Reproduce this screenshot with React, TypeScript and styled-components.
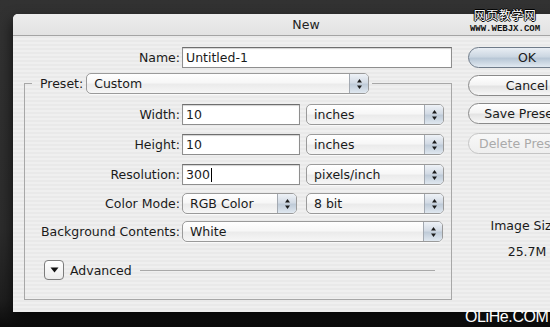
import React from 'react'
import styled, { createGlobalStyle } from 'styled-components'

const Global = createGlobalStyle`
  html, body {
    margin: 0;
    padding: 0;
    background: #2b2b2b;
    overflow: hidden;
  }
  body {
    font-family: "DejaVu Sans", "Liberation Sans", sans-serif;
  }
`

const Page = styled.div`
  position: relative;
  width: 550px;
  height: 327px;
  overflow: hidden;
  box-sizing: border-box;
  padding: 14px 0 0 13px;
  background: linear-gradient(#323232 0, #2c2c2c 70%, #1e1e1e 92%, #0c0c0c 100%);
`

const Dialog = styled.div`
  width: 586px;
  height: 298px;
  border-radius: 5px 5px 0 0;
  overflow: hidden;
  background: repeating-linear-gradient(#efefef 0 2px, #e9e9e9 2px 4px);
  box-shadow: 0 6px 14px rgba(0, 0, 0, 0.7);
  font-size: 12.5px;
  color: #1a1a1a;
`

const TitleBar = styled.div`
  height: 21px;
  border-bottom: 1px solid #a4a4a4;
  background: linear-gradient(#ededed, #e2e2e2);
  display: flex;
  align-items: center;
  justify-content: center;
  font-size: 12.5px;
  color: #222;
`

const Body = styled.div`
  display: flex;
  gap: 16px;
  padding: 11px 0 0 11px;
`

const LeftCol = styled.div`
  width: 428px;
  display: flex;
  flex-direction: column;
`

const FormRow = styled.div<{ $mt?: number }>`
  display: grid;
  grid-template-columns: 155px auto;
  column-gap: 2px;
  align-items: center;
  margin-top: ${p => p.$mt ?? 0}px;
`

const NameRow = styled(FormRow)`
  grid-template-columns: 156px 1fr;
`

const Label = styled.label`
  text-align: right;
  white-space: nowrap;
`

const Controls = styled.div<{ $gap?: number }>`
  display: flex;
  align-items: center;
  gap: ${p => p.$gap ?? 6}px;
`

const TextInput = styled.div<{ $w?: number }>`
  box-sizing: border-box;
  width: ${p => (p.$w ? `${p.$w}px` : '100%')};
  height: 21px;
  background: #fff;
  border: 1px solid #8e8e8e;
  border-top-color: #6e6e6e;
  box-shadow: inset 0 1px 1px rgba(0, 0, 0, 0.18);
  padding: 0 3px;
  display: flex;
  align-items: center;
  white-space: nowrap;
`

const Caret = styled.span`
  display: inline-block;
  width: 1px;
  height: 14px;
  background: #000;
  margin-left: 1px;
`

const PopupBox = styled.div<{ $w: number }>`
  box-sizing: border-box;
  width: ${p => p.$w}px;
  height: 21px;
  border: 1px solid #9a9a9a;
  border-radius: 5px;
  display: flex;
  overflow: hidden;
  background: linear-gradient(#ffffff 0, #f7f7f7 45%, #ebebeb 55%, #f6f6f6 100%);
  box-shadow: 0 1px 0 rgba(255, 255, 255, 0.7);
`

const PopupText = styled.span`
  flex: 1;
  padding-left: 7px;
  display: flex;
  align-items: center;
  white-space: nowrap;
`

const Stepper = styled.span`
  width: 18px;
  border-left: 1px solid #a3a9b1;
  display: flex;
  align-items: center;
  justify-content: center;
  background: linear-gradient(#eef2f7 0, #d3dbe5 45%, #bfcbd8 55%, #e0e8f0 100%);
`

const Fieldset = styled.fieldset`
  margin: 5px 0 0 0;
  padding: 10px 8px 19px 0;
  border: 1px solid #a7a7a7;
  min-width: 0;
`

const Legend = styled.legend`
  margin-left: 7px;
  padding: 0 3px 0 8px;
  display: flex;
  align-items: center;
  gap: 3px;
`

const AdvancedRow = styled.div`
  display: flex;
  align-items: center;
  margin: 18px 0 0 19px;
`

const Disclosure = styled.div`
  box-sizing: border-box;
  width: 20px;
  height: 20px;
  border: 1px solid #7c7c7c;
  border-radius: 4px;
  background: linear-gradient(#ffffff, #ececec);
  display: flex;
  align-items: center;
  justify-content: center;
  margin-right: 6px;
`

const Rule = styled.div`
  flex: 1;
  height: 1px;
  background: #a9a9a9;
  margin: 0 8px 0 8px;
`

const RightCol = styled.div`
  width: 118px;
  display: flex;
  flex-direction: column;
  align-items: stretch;
`

const Button = styled.div<{ $default?: boolean; $disabled?: boolean; $mt?: number }>`
  box-sizing: border-box;
  height: 21px;
  margin-top: ${p => p.$mt ?? 0}px;
  border-radius: 11px;
  border: 1px solid ${p => (p.$disabled ? '#c4c4c4' : p.$default ? '#6f7b89' : '#8a8a8a')};
  color: ${p => (p.$disabled ? '#aaaaaa' : '#1a1a1a')};
  background: ${p =>
    p.$disabled
      ? 'linear-gradient(#f8f8f8, #eeeeee)'
      : p.$default
        ? 'linear-gradient(#e9eef4 0, #ccd7e2 45%, #b8c7d6 55%, #e1e9f1 100%)'
        : 'linear-gradient(#ffffff 0, #f4f4f4 45%, #e4e4e4 55%, #f7f7f7 100%)'};
  display: flex;
  align-items: center;
  justify-content: center;
  white-space: nowrap;
  font-size: 12.5px;
`

const SizeInfo = styled.div`
  margin-top: 64px;
  display: flex;
  flex-direction: column;
  align-items: center;
  gap: 11px;
  white-space: nowrap;
`

const MarkTop = styled.div`
  position: absolute;
  top: 8px;
  left: 466px;
  width: 78px;
  display: flex;
  flex-direction: column;
  align-items: center;
`

const MarkCn = styled.span`
  font-family: "Noto Sans CJK SC", sans-serif;
  font-size: 12px;
  line-height: 14px;
  letter-spacing: 0.5px;
  color: #fff;
  text-shadow: 1px 0 0 #000, -1px 0 0 #000, 0 1px 0 #000, 0 -1px 0 #000;
`

const MarkUrl = styled.span`
  font-family: "Liberation Mono", monospace;
  font-weight: bold;
  font-size: 9px;
  line-height: 10px;
  margin-top: 2px;
  color: #111;
`

const MarkBottom = styled.div`
  position: absolute;
  left: 465px;
  top: 308px;
  font-family: "Liberation Sans", Arial, sans-serif;
  font-size: 16px;
  letter-spacing: -0.4px;
  color: #fff;
`

function Arrows() {
  return (
    <svg width="7" height="12" viewBox="0 0 7 12">
      <path d="M3.5 1 L6 4.5 L1 4.5 Z" fill="#1b1b1b" />
      <path d="M3.5 11 L6 7.5 L1 7.5 Z" fill="#1b1b1b" />
    </svg>
  )
}

function Popup({ w, children }: { w: number; children?: React.ReactNode }) {
  return (
    <PopupBox $w={w}>
      <PopupText>{children}</PopupText>
      <Stepper>
        <Arrows />
      </Stepper>
    </PopupBox>
  )
}

export default function App() {
  return (
    <>
      <Global />
      <Page>
        <Dialog>
          <TitleBar>New</TitleBar>
          <Body>
            <LeftCol>
              <NameRow>
                <Label>Name:</Label>
                <TextInput>Untitled-1</TextInput>
              </NameRow>
              <Fieldset>
                <Legend>
                  <Label>Preset:</Label>
                  <Popup w={283}>Custom</Popup>
                </Legend>
                <FormRow>
                  <Label>Width:</Label>
                  <Controls>
                    <TextInput $w={118}>10</TextInput>
                    <Popup w={138}>inches</Popup>
                  </Controls>
                </FormRow>
                <FormRow $mt={9}>
                  <Label>Height:</Label>
                  <Controls>
                    <TextInput $w={118}>10</TextInput>
                    <Popup w={138}>inches</Popup>
                  </Controls>
                </FormRow>
                <FormRow $mt={9}>
                  <Label>Resolution:</Label>
                  <Controls>
                    <TextInput $w={118}>
                      300<Caret />
                    </TextInput>
                    <Popup w={138}>pixels/inch</Popup>
                  </Controls>
                </FormRow>
                <FormRow $mt={8}>
                  <Label>Color Mode:</Label>
                  <Controls $gap={9}>
                    <Popup w={115}>RGB Color</Popup>
                    <Popup w={138}>8 bit</Popup>
                  </Controls>
                </FormRow>
                <FormRow $mt={7}>
                  <Label>Background Contents:</Label>
                  <Controls>
                    <Popup w={261}>White</Popup>
                  </Controls>
                </FormRow>
                <AdvancedRow>
                  <Disclosure>
                    <svg width="9" height="6" viewBox="0 0 9 6">
                      <path d="M0.5 0.5 L8.5 0.5 L4.5 5.5 Z" fill="#111" />
                    </svg>
                  </Disclosure>
                  <span>Advanced</span>
                  <Rule />
                </AdvancedRow>
              </Fieldset>
            </LeftCol>
            <RightCol>
              <Button $default>OK</Button>
              <Button $mt={7}>Cancel</Button>
              <Button $mt={7}>Save Preset...</Button>
              <Button $mt={9} $disabled>Delete Preset...</Button>
              <SizeInfo>
                <span>Image Size:</span>
                <span>25.7M</span>
              </SizeInfo>
            </RightCol>
          </Body>
        </Dialog>
        <MarkTop>
          <MarkCn>网页教学网</MarkCn>
          <MarkUrl>WWW.WEBJX.COM</MarkUrl>
        </MarkTop>
        <MarkBottom>OLiHe.COM</MarkBottom>
      </Page>
    </>
  )
}
